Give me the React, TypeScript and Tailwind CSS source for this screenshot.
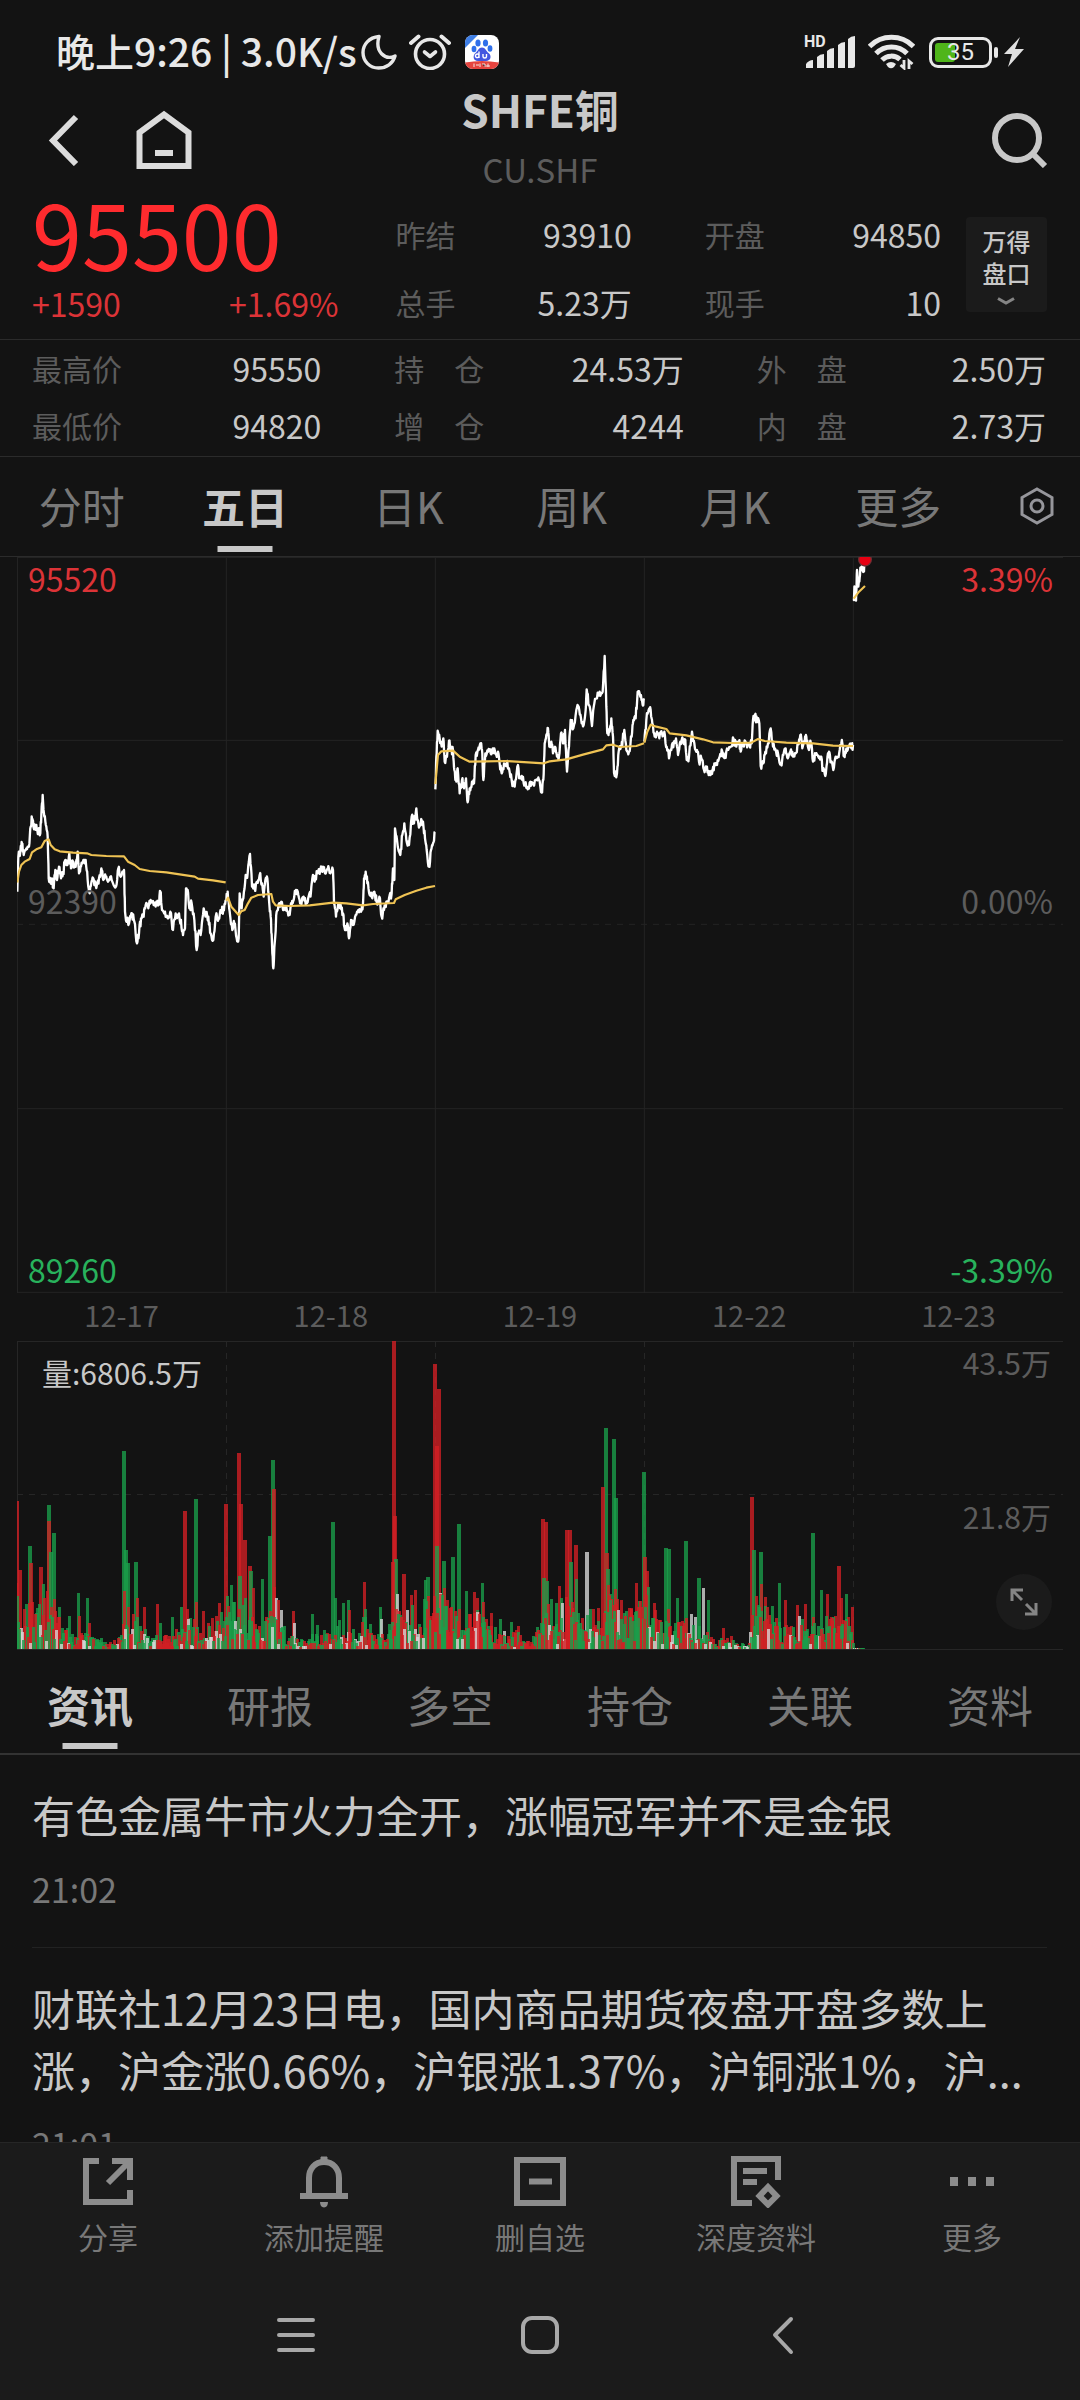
import React, { useState } from "react";

/* ------------------------------------------------------------------ */
/* Chart data                                                          */
/* ------------------------------------------------------------------ */

type Session = { offset: number; price: string; average: string };

// Key points of each trading session, three units per pixel.
const sessions: Session[] = [
  {
    offset: 0,
    price:
      "53,1025 56,920 62,905 67,880 72,915 80,895 88,890 93,830 97,805 103,838 110,825 116,845 122,850 125,795 129,735 134,800 140,830 144,860 147,985 153,1000 157,985 162,1015 167,960 172,990 178,950 184,985 190,970 197,930 203,945 209,910 214,955 220,935 226,950 234,905 238,970 244,950 251,930 258,930 264,990 270,1030 277,990 284,1005 292,1003 298,985 305,955 311,990 318,980 325,995 332,980 340,1000 349,1010 356,955 363,980 373,960 376,1085 382,1115 390,1110 397,1090 404,1115 412,1180 418,1150 424,1105 432,1100 438,1065 446,1075 453,1050 462,1065 470,1055 477,1065 482,1025 487,1080 496,1085 504,1105 512,1085 520,1140 528,1090 536,1100 544,1110 550,1155 556,1135 559,1015 564,1020 569,1075 576,1060 584,1110 591,1200 596,1150 605,1140 612,1075 619,1095 626,1100 633,1150 641,1170 648,1100 657,1105 664,1080 671,1080 678,1050",
    average:
      "53,998 58,965 65,945 75,935 90,927 97,907 110,898 125,892 135,873 147,868 153,885 165,898 180,904 220,908 262,910 275,915 320,918 373,919 385,935 405,945 420,957 450,963 500,967 585,980 595,986 640,991 678,997",
  },
  {
    offset: 0,
    price:
      "680,1050 684,1025 690,1085 698,1140 704,1120 711,1165 717,1165 720,1030 726,1075 731,1045 738,975 744,970 751,912 757,1010 765,1015 772,995 780,975 787,1000 792,1040 797,990 803,985 808,1050 813,1100 817,1180 821,1255 825,1180 831,1085 838,1060 845,1055 852,1080 860,1070 868,1095 876,1065 882,1050 889,1020 896,1035 903,1055 912,1040 920,1055 928,1035 934,1025 938,985 945,995 953,970 962,960 970,950 976,970 984,958 992,970 1000,960 1003,1060 1009,1100 1015,1065 1023,1065 1030,1090 1036,1140 1043,1120 1048,1165 1054,1110 1060,1125 1068,1095 1076,1080 1084,1085 1090,1060 1093,985 1098,965 1103,1000 1110,1035 1118,1045 1124,1025 1131,1055 1139,1040 1146,1100 1153,1080 1160,1055 1168,1045 1176,1030 1180,955 1184,990 1186,835 1192,870 1202,915 1208,855 1214,820 1220,870 1228,885 1236,800 1243,820 1250,775 1256,820 1263,820 1270,815 1276,865 1281,900 1288,950 1294,900 1300,880 1306,845",
    average:
      "680,1052 685,1043 695,1070 717,1095 725,1084 735,1080 745,1060 755,1043 775,1035 815,1032 820,1055 828,1066 870,1068 930,1066 1000,1058 1040,1060 1090,1066 1120,1062 1183,1059 1188,1048 1215,1035 1250,1022 1280,1013 1306,1008",
  },
  {
    offset: 1260,
    price:
      "47,718 50,620 54,542 60,565 66,590 71,565 75,635 82,620 88,572 94,600 100,600 104,660 110,695 114,655 120,730 127,690 133,715 139,685 144,757 150,715 157,695 163,700 168,615 175,600 182,580 187,600 191,690 197,610 205,605 213,610 220,595 228,612 235,605 240,640 246,670 253,640 261,640 268,655 276,690 285,710 293,650 300,680 308,690 316,700 324,718 332,695 341,700 350,690 358,690 366,728 371,690 375,580 380,555 385,535 389,590 395,575 400,610 406,590 412,620 418,620 424,550 430,580 436,540 442,665 448,590 453,510 461,535 470,480 477,470 484,505 492,525 498,480 501,418 508,465 517,528 524,460 532,445 540,425 549,425 555,318 560,470 563,550 570,545 575,505 580,560 583,668 592,670 597,605 604,590 609,570 614,540 620,600 628,605 636,560 641,510 648,505 654,425 662,440 669,465 673,445",
    average:
      "47,702 55,615 65,604 100,602 120,620 150,635 200,634 260,633 373,640 390,634 440,628 490,614 550,598 560,586 580,584 600,591 650,588 673,580",
  },
  {
    offset: 1260,
    price:
      "674,575 680,510 687,480 693,480 698,520 705,560 712,545 719,565 727,550 734,545 741,590 748,625 755,600 763,575 769,565 775,615 782,575 790,570 797,570 801,630 808,620 817,545 824,580 832,600 838,635 845,625 853,660 860,650 867,675 877,672 884,640 892,645 900,620 908,605 916,615 924,600 933,590 942,568 950,590 958,575 963,605 970,580 980,580 990,585 996,580 1000,510 1006,495 1012,515 1019,520 1023,648 1031,640 1037,605 1045,580 1053,535 1060,590 1068,600 1075,610 1084,640 1091,615 1098,595 1104,625 1112,605 1120,620 1128,610 1135,580 1142,555 1148,595 1155,575 1160,560 1166,595 1174,580 1180,635 1188,615 1196,620 1203,620 1210,660 1217,678 1222,640 1228,605 1234,635 1241,660 1248,620 1255,620 1262,585 1268,580 1273,615 1280,595 1288,590 1295,595 1300,585",
    average:
      "674,578 683,545 693,524 710,530 740,537 750,550 800,556 850,568 880,577 940,579 995,578 1015,567 1035,573 1100,578 1180,580 1240,587 1300,588",
  },
  {
    offset: 1260,
    price: "1302,148 1305,110 1309,152 1312,60 1315,110 1319,95 1323,55 1329,45 1332,62 1336,30",
    average: "1302,146 1318,125 1336,108",
  },
];

function makeRandom(seed: number) {
  let s = seed;
  return () => {
    s = (s * 1664525 + 1013904223) % 4294967296;
    return s / 4294967296;
  };
}

function parse(points: string, offset: number) {
  return points.split(" ").map((p) => {
    const [x, y] = p.split(",").map(Number);
    return [x + offset, y] as [number, number];
  });
}

function withTicks(points: [number, number][], rand: () => number) {
  const out: string[] = [];
  for (let i = 0; i < points.length - 1; i++) {
    const [x0, y0] = points[i];
    const [x1, y1] = points[i + 1];
    out.push(`${x0},${y0}`);
    for (let k = 1; k <= 3; k++) {
      const t = k / 4;
      const x = x0 + (x1 - x0) * t;
      const y = y0 + (y1 - y0) * t + (rand() - 0.5) * 26;
      out.push(`${x.toFixed(1)},${y.toFixed(1)}`);
    }
  }
  const last = points[points.length - 1];
  out.push(`${last[0]},${last[1]}`);
  return out.join(" ");
}

const tickRandom = makeRandom(11);
const priceLines = sessions.map((s) => withTicks(parse(s.price, s.offset), tickRandom));
const averageLines = sessions.map((s) =>
  parse(s.average, s.offset)
    .map((p) => p.join(","))
    .join(" "),
);

const volumeColors: Record<string, string> = { r: "#d31f24", g: "#1a9f4a", w: "#d8d8d8" };

// x, height, colour of the tallest volume bars.
const peaks =
  "0,148,r 13,103,g 14,86,r 3,79,r 24,82,r 27,65,g 32,144,g 32,128,r 34,97,g 37,116,g 38,50,r 43,42,g 53,33,g 62,56,g 63,33,r 71,51,g 73,26,r 107,198,g 109,99,g 111,86,g 108,58,r 119,87,g 121,51,r 128,42,r 141,45,r 144,26,g 156,32,g 165,42,g 168,138,r 171,40,r 172,30,w 179,150,g 180,47,r 187,38,r 200,33,r 203,46,r 209,145,r 211,53,g 215,64,g 218,47,g 222,196,r 224,145,r 223,73,g 228,109,r 229,51,g 233,83,r 234,78,g 237,61,r 246,70,g 253,113,g 256,189,g 257,160,r 258,62,r 260,51,w 262,49,r 265,39,w 277,38,r 278,26,w 296,35,g 301,24,g 316,127,g 319,51,g 327,46,g 332,49,g 333,39,r 348,67,r 349,40,g 364,42,g 365,30,w 376,87,r 377,308,r 378,133,r 379,90,g 381,55,w 387,75,r 391,39,w 395,54,r 396,44,g 399,59,r 408,50,g 409,69,g 411,72,g 418,285,r 422,260,r 420,203,r 420,103,g 424,56,w 427,88,g 428,61,r 431,49,r 436,92,g 442,125,g 443,40,r 450,58,g 458,57,r 461,51,r 466,66,g 467,47,r 461,37,w 475,36,r 484,30,g 488,18,w 495,27,g 502,23,r 526,130,r 529,127,r 527,71,g 531,68,g 535,50,g 540,46,g 543,63,r 545,51,g 546,46,w 550,119,r 553,119,r 554,87,g 556,47,r 559,104,r 560,70,g 562,36,g 570,97,w 574,40,g 577,40,r 582,41,r 586,162,r 589,221,g 590,96,r 591,80,g 592,64,r 594,55,g 597,210,g 599,151,g 599,60,r 601,50,r 602,39,w 605,49,r 608,36,g 615,41,r 620,66,r 622,42,r 627,177,g 628,92,r 630,78,r 632,62,g 638,46,r 649,101,g 652,100,g 652,40,r 661,51,g 669,108,g 670,31,r 675,35,w 679,32,w 682,71,g 687,61,w 692,49,g 707,21,r 735,152,r 737,99,g 740,53,r 744,97,g 745,65,r 749,52,r 756,43,g 763,66,g 769,49,r 781,44,r 783,33,w 789,45,r 796,116,g 797,32,r 805,59,g 811,55,r 816,31,r 822,83,r 825,51,r 830,55,g 832,32,r 836,42,r"
    .split(" ")
    .map((p) => {
      const [x, h, c] = p.split(",");
      return { x: Number(x), h: Number(h), c };
    });

// Height envelope of the ordinary minutes.
const envelope: [number, number][] = [
  [0, 75], [6, 52], [14, 55], [20, 42], [30, 66], [40, 40], [48, 26], [60, 18], [75, 18], [84, 13],
  [92, 7], [100, 10], [106, 28], [112, 46], [124, 30], [136, 20], [146, 15], [160, 22], [175, 34],
  [190, 26], [200, 38], [212, 54], [226, 48], [240, 30], [250, 38], [262, 44], [270, 20], [282, 15],
  [290, 7], [298, 22], [314, 20], [322, 32], [334, 34], [340, 16], [350, 42], [358, 16], [370, 18],
  [378, 60], [386, 36], [400, 38], [404, 30], [412, 58], [422, 64], [434, 46], [446, 36], [460, 46],
  [474, 28], [486, 16], [500, 22], [508, 10], [516, 12], [523, 30], [530, 62], [540, 30], [550, 60],
  [562, 32], [572, 38], [584, 30], [594, 66], [606, 40], [618, 46], [630, 58], [646, 34], [656, 28],
  [668, 32], [686, 26], [700, 10], [712, 18], [722, 8], [731, 7], [735, 48], [748, 50], [762, 32],
  [776, 24], [784, 34], [794, 24], [808, 38], [820, 34], [830, 34], [836, 20], [838, 2], [848, 1],
];

function envelopeAt(x: number) {
  for (let i = 0; i < envelope.length - 1; i++) {
    const [x0, h0] = envelope[i];
    const [x1, h1] = envelope[i + 1];
    if (x >= x0 && x <= x1) return h0 + ((h1 - h0) * (x - x0)) / (x1 - x0);
  }
  return 1;
}

const volumeRandom = makeRandom(29);
const minuteBars = Array.from({ length: 848 }, (_, x) => {
  const pick = volumeRandom();
  const c = pick < 0.44 ? "r" : pick < 0.9 ? "g" : "w";
  const level = 0.15 + 0.8 * volumeRandom();
  const h = Math.max(1, Math.round(envelopeAt(x) * level * (c === "w" ? 0.6 : 1)));
  return { x, h, c };
});
const volumeBars = [...minuteBars, ...peaks].sort((a, b) => b.h - a.h);

/* ------------------------------------------------------------------ */
/* Icons                                                               */
/* ------------------------------------------------------------------ */

const MoonIcon = () => (
  <svg className="h-9 w-9" viewBox="0 0 36 36" fill="none" stroke="#e8e8e8" strokeWidth="3.4" strokeLinejoin="round" aria-hidden="true">
    <path d="M18 2.5C8 3.500 2 10.500 2 18.500C2 27.500 9 34 17.500 34C25.500 34 32 29.500 34 22C24 26.500 13.500 18 18 2.500Z" />
  </svg>
);

const AlarmIcon = () => (
  <svg className="h-9 w-[42px]" viewBox="0 0 42 36" fill="none" stroke="#e8e8e8" strokeWidth="3.6" strokeLinecap="round" strokeLinejoin="round" aria-hidden="true">
    <circle cx="21" cy="20" r="14.500" />
    <path d="M15.500 18L21 22.500L26.500 18" />
    <path d="M2 9L9.500 2.500M40 9L32.500 2.500" strokeWidth="4" />
  </svg>
);

const BaiduIcon = () => (
  <svg className="h-[34px] w-[34px]" viewBox="0 0 34 34" aria-hidden="true">
    <defs>
      <clipPath id="tile"><rect width="34" height="34" rx="8" /></clipPath>
    </defs>
    <g clipPath="url(#tile)">
      <rect width="34" height="34" fill="#fff" />
      <path d="M0 0H13L0 13Z" fill="#3f7fe6" />
      <g fill="#2f6fea">
        <ellipse cx="13" cy="8" rx="2.600" ry="3.600" />
        <ellipse cx="20.500" cy="8" rx="2.600" ry="3.600" />
        <ellipse cx="9" cy="14" rx="2.400" ry="3.200" />
        <ellipse cx="25" cy="13.500" rx="2.400" ry="3.200" />
      </g>
      <path d="M17 12.500C13.500 12.500 13 16 10.500 18C7.500 20.500 8 26 13 26H21C26 26 27 20.500 23.500 18C21 16 20.500 12.500 17 12.500Z" fill="#4257e0" />
      <path d="M14 16.500V23M14 20.500A1.800 1.800 0 1 0 14 21.200M18 19V21.500C18 23.500 21.500 23.500 21.500 21.500V19" fill="none" stroke="#fff" strokeWidth="1.400" />
      <path d="M0 27.500Q17 24.500 34 27.500V34H0Z" fill="#e5443f" />
      <path d="M9 28.500V32M11 30H14M15 28.500V32M17 29H20V32M21 31H25M23 28.500V32" stroke="#fff" strokeWidth="1" opacity=".85" />
    </g>
  </svg>
);

const SignalIcon = () => (
  <svg className="h-8 w-[50px]" viewBox="0 0 50 32" fill="#e8e8e8" aria-hidden="true">
    <path d="M0 32V28Q3 24 7 24V32Z" />
    <path d="M11 32V21Q14 18 18 18V32Z" />
    <path d="M21 32V15Q24 12 28 12V32Z" />
    <path d="M32 32V9Q35 6 39 6V32Z" />
    <path d="M42 32V3Q45 0 49 0V30Q49 32 47 32Z" />
  </svg>
);

const WifiIcon = () => (
  <svg className="h-9 w-[47px]" viewBox="0 0 47 36" fill="none" stroke="#e8e8e8" strokeWidth="5" aria-hidden="true">
    <path d="M1.500 12.500A31 31 0 0 1 45.500 12.500" />
    <path d="M8 19.500A21.500 21.500 0 0 1 39 19.500" />
    <path d="M14 26A13 13 0 0 1 32 25.500" />
    <path d="M18 30Q23 26 28 30L26 33Q23 35.500 20 33Z" fill="#e8e8e8" stroke="none" />
    <path d="M36 26V34L32.500 31M41 35V27L44.500 30" strokeWidth="2.800" />
  </svg>
);

const BoltIcon = () => (
  <svg className="h-[30px] w-5" viewBox="0 0 20 30" fill="#e0e0e0" aria-hidden="true">
    <path d="M16 0L0 17H8L4 30L20 12H11Z" />
  </svg>
);

const BackIcon = () => (
  <svg className="h-[52px] w-8" viewBox="0 0 32 52" fill="none" stroke="#dcdcdc" strokeWidth="6" aria-hidden="true">
    <path d="M28 3L5 26.500L28 50" />
  </svg>
);

const HomeIcon = () => (
  <svg className="h-[60px] w-14" viewBox="0 0 56 60" fill="none" stroke="#dcdcdc" strokeWidth="6" aria-hidden="true">
    <path d="M3.500 56V22.500L28 4.500L52.500 22.500V56Z" />
    <path d="M19 43H37" />
  </svg>
);

const SearchIcon = () => (
  <svg className="h-14 w-14" viewBox="0 0 56 56" fill="none" stroke="#c8c8c8" strokeWidth="6" aria-hidden="true">
    <circle cx="25" cy="26" r="22" />
    <path d="M40 41L53 54" />
  </svg>
);

const ExpandIcon = () => (
  <svg className="h-7 w-7" viewBox="0 0 28 28" fill="none" stroke="#858585" strokeWidth="3" aria-hidden="true">
    <path d="M13 2H2V13M2.500 2.500L12 12M15 26H26V15M25.500 25.500L16 16" />
  </svg>
);

const HexIcon = () => (
  <svg className="h-[38px] w-[34px]" viewBox="0 0 34 38" fill="none" stroke="#96969b" strokeWidth="3" aria-hidden="true">
    <path d="M17 2L32 10.500V27.500L17 36L2 27.500V10.500Z" />
    <circle cx="17" cy="19" r="6" />
  </svg>
);

const ShareIcon = () => (
  <svg className="h-[52px] w-[52px]" viewBox="0 0 52 52" fill="none" stroke="#8c8c8c" strokeWidth="6" aria-hidden="true">
    <path d="M17 5H4V46H48V34M30 5H48V24M47 6L26 27" />
  </svg>
);

const BellIcon = () => (
  <svg className="h-[52px] w-[52px]" viewBox="0 0 52 52" fill="none" stroke="#8c8c8c" strokeWidth="6" aria-hidden="true">
    <path d="M11 40V22C11 12.500 17 6 26 6S41 12.500 41 22V40M2 40H50" />
    <path d="M23 1H29V6H23Z" strokeWidth="1" fill="#8c8c8c" />
    <path d="M22 46H30Q30 51 26 51.500Q22 51 22 46Z" fill="#8c8c8c" stroke="none" />
  </svg>
);

const RemoveIcon = () => (
  <svg className="h-[52px] w-[52px]" viewBox="0 0 52 52" fill="none" stroke="#8c8c8c" strokeWidth="6" aria-hidden="true">
    <path d="M3 4H49V47H3ZM15 25.500H38" />
  </svg>
);

const DocIcon = () => (
  <svg className="h-[52px] w-[52px]" viewBox="0 0 52 52" fill="none" stroke="#8c8c8c" strokeWidth="6" aria-hidden="true">
    <path d="M22 47H4V3H48V24M13 15H37M13 26H27" />
    <path d="M38 31L46.500 40L38 48.500L29.500 40Z" />
  </svg>
);

const DotsIcon = () => (
  <svg className="h-[52px] w-[52px]" viewBox="0 0 52 52" fill="#8c8c8c" aria-hidden="true">
    <path d="M4 21H12V30H4ZM22 21H30V30H22ZM40 21H48V30H40Z" />
  </svg>
);

/* ------------------------------------------------------------------ */
/* Page parts                                                          */
/* ------------------------------------------------------------------ */

function StatusBar() {
  return (
    <div className="flex h-20 items-center justify-between pr-14 pl-14 pt-6 text-[#e8e8e8]">
      <div className="flex items-center">
        <span className="pb-1 text-[39px] leading-[52px] font-medium">晚上9:26 | 3.0K/s</span>
        <span className="ml-1"><MoonIcon /></span>
        <span className="ml-3"><AlarmIcon /></span>
        <span className="ml-3.5"><BaiduIcon /></span>
      </div>
      <div className="flex items-center">
        <div className="relative">
          <SignalIcon />
          <span className="absolute -top-1 -left-0.5 font-[Roboto] text-base leading-5 font-bold">HD</span>
        </div>
        <span className="ml-3"><WifiIcon /></span>
        <div className="ml-3.5 flex h-[31px] w-[63px] rounded-[9px] border-[3px] border-[#e8e8e8] p-[3px]">
          <div className="relative flex flex-1 items-center justify-center">
            <div className="absolute inset-y-0 left-0 w-5 rounded-[3px] bg-[#4fb51a]" />
            <span className="relative font-[Roboto] text-2xl leading-5">35</span>
          </div>
        </div>
        <div className="ml-0.5 h-[11px] w-1 rounded-sm bg-[#e8e8e8]" />
        <span className="ml-1.5"><BoltIcon /></span>
      </div>
    </div>
  );
}

function Header() {
  return (
    <header className="grid h-[120px] grid-cols-3 items-center">
      <div className="flex items-center gap-14 pl-12">
        <button aria-label="返回"><BackIcon /></button>
        <button aria-label="首页"><HomeIcon /></button>
      </div>
      <div className="self-start text-center">
        <h1 className="text-[44px] leading-[58px] font-bold text-[#c8c8c8]">SHFE铜</h1>
        <p className="text-[33px] leading-[62px] text-[#5c5c5c]">CU.SHF</p>
      </div>
      <div className="flex justify-end pr-8">
        <button aria-label="搜索"><SearchIcon /></button>
      </div>
    </header>
  );
}

function Stat({ label, value }: { label: string; value: string }) {
  return (
    <div className="flex items-center justify-between">
      <dt className="text-[30px] text-[#5c5c5c]">{label}</dt>
      <dd className="text-[32px] text-[#c8c8c8]">{value}</dd>
    </div>
  );
}

function Quote() {
  return (
    <section className="flex h-[139px] items-start pr-[33px] pl-8">
      <div className="flex-[306] text-[#ff2b2e]">
        <div className="text-[90px] leading-[64px]">95500</div>
        <div className="flex justify-between pt-1.5 text-[32px] leading-[66px] text-[#dc3337]">
          <span>+1590</span>
          <span>+1.69%</span>
        </div>
      </div>
      <dl className="ml-[57px] flex-[236] leading-[68px]">
        <Stat label="昨结" value="93910" />
        <Stat label="总手" value="5.23万" />
      </dl>
      <dl className="ml-[73px] flex-[236] leading-[68px]">
        <Stat label="开盘" value="94850" />
        <Stat label="现手" value="10" />
      </dl>
      <button className="mt-[17px] ml-[25px] flex h-[95px] w-[81px] flex-col items-center rounded-sm bg-[#1b1b1b] pt-2 text-2xl leading-[32px] font-medium text-[#c8c8c8]">
        <span>万得</span>
        <span>盘口</span>
        <svg className="mt-2 h-2 w-[18px]" viewBox="0 0 18 8" fill="none" stroke="#858585" strokeWidth="3" aria-hidden="true">
          <path d="M1 1.500L9 6L17 1.500" />
        </svg>
      </button>
    </section>
  );
}

function Details() {
  const items = [
    ["最高价", "95550"],
    ["持　仓", "24.53万"],
    ["外　盘", "2.50万"],
    ["最低价", "94820"],
    ["增　仓", "4244"],
    ["内　盘", "2.73万"],
  ];
  return (
    <dl className="grid grid-cols-3 gap-x-[73px] border-y border-[#2b2b2b] pr-[34px] pl-8 pb-0.5 leading-[57px]">
      {items.map(([label, value]) => (
        <Stat key={label} label={label} value={value} />
      ))}
    </dl>
  );
}

function Tab({ label, active, onClick, height }: { label: string; active: boolean; onClick: () => void; height: string }) {
  return (
    <button
      role="tab"
      aria-selected={active}
      onClick={onClick}
      className={`relative flex-1 text-[43px] leading-none ${height} ${active ? "font-bold text-[#c8c8c8]" : "text-[#787878]"}`}
    >
      {label}
      {active && <span className="absolute bottom-1 left-1/2 h-1.5 w-[55px] -translate-x-1/2 bg-[#c8c8c8]" />}
    </button>
  );
}

function PeriodTabs() {
  const [active, setActive] = useState("五日");
  return (
    <div className="flex items-center border-b border-[#2b2b2b]">
      <div role="tablist" className="flex flex-1">
        {["分时", "五日", "日K", "周K", "月K", "更多"].map((t) => (
          <Tab key={t} label={t} active={t === active} onClick={() => setActive(t)} height="h-[99px] pb-0.5" />
        ))}
      </div>
      <button aria-label="设置" className="flex w-[100px] justify-center pb-0.5 pl-3.5"><HexIcon /></button>
    </div>
  );
}

function PriceChart() {
  return (
    <div className="relative h-[736px] text-[32px] leading-[42px]">
      <svg className="block h-full w-full" viewBox="52 21 3138 2208" preserveAspectRatio="none" role="img" aria-label="五日走势">
        <g fill="none" stroke="#232323" strokeWidth="3">
          <path d="M52 22.500H3190M52 571H3190M52 1676H3190M52 2227H3190" />
          <path d="M53.500 21V2229M680 21V2229M1307 21V2229M1934 21V2229M2561 21V2229" />
          <path d="M52 1123H3190" strokeDasharray="18 18" />
        </g>
        <g fill="none" strokeLinejoin="round">
          {priceLines.map((p, i) => <polyline key={i} points={p} stroke="#fff" strokeWidth="7" />)}
          {averageLines.map((p, i) => <polyline key={i} points={p} stroke="#efc354" strokeWidth="6.500" />)}
        </g>
        <circle cx="2596" cy="29" r="21" fill="#6b3034" />
        <circle cx="2596" cy="29" r="17" fill="#e60012" />
      </svg>
      <span className="absolute top-0 left-[11px] text-[#dc3337]">95520</span>
      <span className="absolute top-0 right-2.5 text-[#dc3337]">3.39%</span>
      <span className="absolute top-[322px] left-[11px] text-[#5c5c5c]">92390</span>
      <span className="absolute top-[322px] right-2.5 text-[#5c5c5c]">0.00%</span>
      <span className="absolute bottom-[3px] left-[11px] text-[#28b25c]">89260</span>
      <span className="absolute right-2.5 bottom-[3px] text-[#28b25c]">-3.39%</span>
    </div>
  );
}

function VolumeChart() {
  return (
    <div className="relative h-[309px] text-[30px] leading-[42px]">
      <svg className="block h-full w-full" viewBox="0 0 1046 309" preserveAspectRatio="none" role="img" aria-label="成交量">
        <g fill="none" stroke="#262626">
          <path d="M0 .5H1046M0 308.500H1046M.5 0V309" />
          <path d="M0 153.500H1046M209.500 0V309M418.500 0V309M627.500 0V309M836.500 0V309" strokeDasharray="6 6" />
        </g>
        {volumeBars.map((b, i) => (
          <rect key={i} x={b.x - 2} y={308 - b.h} width={b.h > 70 ? 4 : 3} height={b.h} fill={volumeColors[b.c]} fillOpacity=".78" />
        ))}
      </svg>
      <span className="absolute top-2.5 left-[25px] text-[#c8c8c8]">量:6806.5万</span>
      <span className="absolute top-0 right-3 text-[#5c5c5c]">43.5万</span>
      <span className="absolute top-[154px] right-3 text-[#5c5c5c]">21.8万</span>
      <button aria-label="放大" className="absolute right-[11px] bottom-5 flex h-14 w-14 items-center justify-center rounded-full bg-[#1b1b1b]">
        <ExpandIcon />
      </button>
    </div>
  );
}

function Charts() {
  return (
    <section className="px-[17px]">
      <PriceChart />
      <div className="grid h-12 grid-cols-5 text-center text-[29px] leading-[42px] text-[#5c5c5c]">
        {["12-17", "12-18", "12-19", "12-22", "12-23"].map((d) => <span key={d}>{d}</span>)}
      </div>
      <VolumeChart />
    </section>
  );
}

function InfoTabs() {
  const [active, setActive] = useState("资讯");
  return (
    <div role="tablist" className="flex border-b-2 border-[#333]">
      {["资讯", "研报", "多空", "持仓", "关联", "资料"].map((t) => (
        <Tab key={t} label={t} active={t === active} onClick={() => setActive(t)} height="h-[103px] pt-1.5" />
      ))}
    </div>
  );
}

function NewsItem({ title, time }: { title: React.ReactNode; time: string }) {
  return (
    <article className="mr-[33px] ml-8 border-b border-[#222] pt-7 pb-[38px]">
      <h2 className="text-[43px] leading-[62px] text-[#c8c8c8]">
        <a href="#news">{title}</a>
      </h2>
      <time className="mt-6 block text-[34px] leading-10 text-[#787878]">{time}</time>
    </article>
  );
}

function BottomBar() {
  const actions = [
    { label: "分享", icon: <ShareIcon /> },
    { label: "添加提醒", icon: <BellIcon /> },
    { label: "删自选", icon: <RemoveIcon /> },
    { label: "深度资料", icon: <DocIcon /> },
    { label: "更多", icon: <DotsIcon /> },
  ];
  return (
    <footer className="border-t border-[#262626] bg-[#1b1b1b]">
      <div className="grid grid-cols-5 pt-[13px]">
        {actions.map((a) => (
          <button key={a.label} className="flex flex-col items-center gap-2 text-[30px] leading-10 text-[#787878]">
            {a.icon}
            {a.label}
          </button>
        ))}
      </div>
      <nav className="flex justify-center gap-[204px] pt-[59px] pb-[45px]" aria-label="系统导航">
        <button aria-label="最近任务">
          <svg className="h-10 w-10" viewBox="0 0 40 40" stroke="#a8a8a8" strokeWidth="4" strokeLinecap="round" aria-hidden="true">
            <path d="M3 5H37M3 20H37M3 35H37" />
          </svg>
        </button>
        <button aria-label="主屏幕">
          <svg className="h-10 w-10" viewBox="0 0 40 40" fill="none" stroke="#a8a8a8" strokeWidth="4" aria-hidden="true">
            <rect x="3" y="3" width="34" height="34" rx="9" />
          </svg>
        </button>
        <button aria-label="后退">
          <svg className="h-10 w-10" viewBox="0 0 40 40" fill="none" stroke="#a8a8a8" strokeWidth="4" strokeLinecap="round" strokeLinejoin="round" aria-hidden="true">
            <path d="M27 4L11 20L27 37" />
          </svg>
        </button>
      </nav>
    </footer>
  );
}

export default function App() {
  return (
    <div className="flex h-screen flex-col bg-[#131313] font-['Noto_Sans_CJK_SC',sans-serif]" lang="zh-CN">
      <StatusBar />
      <Header />
      <Quote />
      <Details />
      <PeriodTabs />
      <Charts />
      <InfoTabs />
      <main className="min-h-0 flex-1 overflow-hidden">
        <NewsItem title="有色金属牛市火力全开，涨幅冠军并不是金银" time="21:02" />
        <NewsItem title="财联社12月23日电，国内商品期货夜盘开盘多数上涨，沪金涨0.66%，沪银涨1.37%，沪铜涨1%，沪..." time="21:01" />
      </main>
      <BottomBar />
    </div>
  );
}
